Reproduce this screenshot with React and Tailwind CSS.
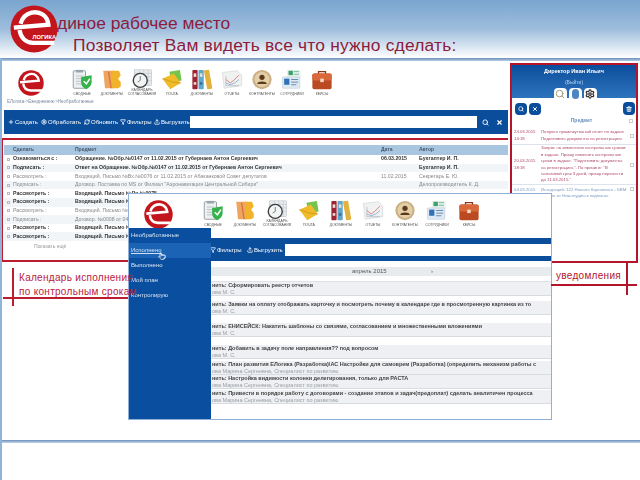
import { Plus, Settings, RefreshCw, Filter, Upload, Search, X, Trash2, Pointer } from "lucide-react";

// Логотип
function Logo({ className, label = true }) {
  return (
    <svg viewBox="0 0 100 100" className={className}>
      <circle cx="50" cy="50" r="49" fill="#c3161c" />
      <path d="M8 47 L80 41 C78 22 62 12 45 16 C33 19 25 28 22 39" fill="none" stroke="#fff" strokeWidth="9" />
      <path d="M20 52 C22 68 33 78 48 79 L92 79" fill="none" stroke="#fff" strokeWidth="9" />
      <path d="M30 36 L68 33" stroke="#c3161c" strokeWidth="2" />
      {label && (
        <text x="47" y="71" fontSize="12" fontWeight="700" fill="#fff" fontFamily="Liberation Sans, sans-serif">ЛОГИКА</text>
      )}
    </svg>
  );
}

// Иконки меню
function IconSvodka() {
  return (
    <svg viewBox="0 0 24 24" className="w-full h-full">
      <rect x="2" y="2" width="14" height="20" rx="1" fill="#eef1f2" stroke="#8b959c" />
      <rect x="5" y="1" width="8" height="3" fill="#9aa4ab" />
      <path d="M5 8h8M5 11h6M5 14h7M5 17h8" stroke="#b4bcc2" />
      <path d="M11 9 L23 7 V15 C23 20 18 22 17 23 C15 22 11 20 11 15 Z" fill="#35b34a" />
      <path d="M14 14 L17 17 L21 11" fill="none" stroke="#fff" strokeWidth="1.8" />
    </svg>
  );
}
function IconFolder() {
  return (
    <svg viewBox="0 0 24 24" className="w-full h-full">
      <path d="M2 2 H14 V22 H4 Z" fill="#eda55f" />
      <path d="M8 3 L11 22" stroke="#d9743a" strokeWidth="1.5" />
      <path d="M12 2 H20 L22 7 L19 11 L22 15 V20 L19 22 H12 Z" fill="#f1b32a" />
    </svg>
  );
}
function IconClock() {
  return (
    <svg viewBox="0 0 24 24" className="w-full h-full">
      <rect x="3" y="1" width="20" height="18" fill="#e8ecef" stroke="#a8b0b6" strokeWidth="0.5" />
      <path d="M3 5h20M3 9h20M3 13h20M9 1v18M14 1v18M19 1v18" stroke="#b9c0c6" strokeWidth="0.6" />
      <circle cx="10" cy="13" r="8" fill="#f3f4f4" stroke="#3c3f42" strokeWidth="1.6" />
      <path d="M10 8v5l-3 2" stroke="#6b6f73" fill="none" />
    </svg>
  );
}
function IconMail() {
  return (
    <svg viewBox="0 0 24 24" className="w-full h-full">
      <path d="M9 3 L21 1 L23 13 L12 15 Z" fill="#74c44d" />
      <path d="M1 11 L14 5 L22 16 L10 23 Z" fill="#f0bb28" />
      <path d="M1 11 L13 15 L22 16" fill="none" stroke="#c9901a" strokeWidth="0.8" />
    </svg>
  );
}
function IconBinders() {
  return (
    <svg viewBox="0 0 24 24" className="w-full h-full">
      <rect x="1" y="1" width="6" height="22" rx="1" fill="#9e2433" />
      <rect x="8" y="1" width="6" height="22" rx="1" fill="#5fa7c9" />
      <rect x="16" y="1" width="6" height="22" rx="1" fill="#e3b23c" transform="rotate(-10 19 12)" />
      <rect x="2.5" y="5" width="3" height="4" fill="#e9e0d8" />
      <rect x="9.5" y="5" width="3" height="4" fill="#e9e0d8" />
      <rect x="2.5" y="15" width="3" height="3" fill="#e9e0d8" />
      <rect x="9.5" y="15" width="3" height="3" fill="#3f6f8f" />
    </svg>
  );
}
function IconChart() {
  return (
    <svg viewBox="0 0 24 24" className="w-full h-full">
      <path d="M1 4 L18 2 L23 7 V19 L3 22 Z" fill="#f0f2f2" stroke="#c6cbcd" strokeWidth="0.6" />
      <path d="M5 8 V19 H20" stroke="#9aa2a8" fill="none" strokeWidth="0.6" />
      <path d="M5 12 L10 16 L14 13 L20 7" stroke="#d5504e" fill="none" strokeWidth="0.8" />
      <path d="M5 16 L10 18 L15 16 L20 12" stroke="#6f9fd0" fill="none" strokeWidth="0.8" />
    </svg>
  );
}
function IconContact() {
  return (
    <svg viewBox="0 0 24 24" className="w-full h-full">
      <circle cx="12" cy="12" r="11" fill="#cdb084" />
      <circle cx="12" cy="12" r="8.5" fill="#e3cfa8" />
      <circle cx="12" cy="9.5" r="3" fill="#5e3a1c" />
      <path d="M6.5 17 C7 13.5 17 13.5 17.5 17 Z" fill="#5e3a1c" />
    </svg>
  );
}
function IconStaff() {
  return (
    <svg viewBox="0 0 24 24" className="w-full h-full">
      <rect x="6" y="1" width="16" height="9" fill="#e9f2ef" />
      <rect x="8" y="2" width="5" height="5" fill="#3ca06a" />
      <path d="M14 3h6M14 6h6" stroke="#63b58a" />
      <rect x="1" y="9" width="20" height="13" rx="1" fill="#dfe9f3" stroke="#a9bdd2" strokeWidth="0.5" />
      <rect x="3" y="11" width="6" height="7" fill="#2f72b8" />
      <path d="M11 12h8M11 15h8M11 18h6" stroke="#5a7fa5" />
    </svg>
  );
}
function IconCase() {
  return (
    <svg viewBox="0 0 24 24" className="w-full h-full">
      <path d="M8 6 V3 H16 V6" fill="none" stroke="#8c3518" strokeWidth="1.5" />
      <rect x="1" y="5" width="22" height="18" rx="2" fill="#bb4a22" />
      <rect x="1" y="5" width="22" height="8" rx="2" fill="#d9683a" />
      <rect x="10" y="11" width="4" height="4" fill="#f0d9c2" />
    </svg>
  );
}

const mainIcons = [
  { Icon: IconSvodka, label: "СВОДНЫЕ" },
  { Icon: IconFolder, label: "ДОКУМЕНТЫ" },
  { Icon: IconClock, label: "КАЛЕНДАРЬ СОГЛАСОВАНИЯ" },
  { Icon: IconMail, label: "ПОЧТА" },
  { Icon: IconBinders, label: "ДОКУМЕНТЫ" },
  { Icon: IconChart, label: "ОТЧЕТЫ" },
  { Icon: IconContact, label: "КОНТРАГЕНТЫ" },
  { Icon: IconStaff, label: "СОТРУДНИКИ" },
  { Icon: IconCase, label: "КЕЙСЫ" },
];

const rows = [
  { bold: true, a: "Ознакомиться с :", b: "Обращение. №Обр.№0147 от 11.02.2015 от Губернаев Антон Сергеевич", c: "06.03.2015", d: "Бухгалтер И. П." },
  { bold: true, a: "Подписать :", b: "Ответ на Обращение. №Обр.№0147 от 11.02.2015 от Губернаев Антон Сергеевич", c: "", d: "Бухгалтер И. П." },
  { bold: false, a: "Рассмотреть :", b: "Входящий. Письмо №Вх.№0076 от 11.02.2015 от Абаканковой Совет депутатов", c: "11.02.2015", d: "Секретарь Е. Ю." },
  { bold: false, a: "Подписать :", b: "Договор. Поставка по МS от Филиал \"Аэронавигация Центральной Сибири\"", c: "", d: "Делопроизводитель К. Д." },
  { bold: true, a: "Рассмотреть :", b: "Входящий. Письмо №Вх.№0075", c: "", d: "" },
  { bold: true, a: "Рассмотреть :", b: "Входящий. Письмо №Вх.№0074", c: "", d: "" },
  { bold: false, a: "Рассмотреть :", b: "Входящий. Письмо №Вх", c: "", d: "" },
  { bold: false, a: "Подписать :", b: "Договор. №0008 от 04", c: "", d: "" },
  { bold: true, a: "Рассмотреть :", b: "Входящий. Письмо №Вх", c: "", d: "" },
  { bold: true, a: "Рассмотреть :", b: "Входящий. Письмо №Вх", c: "", d: "" },
];

const tasks = [
  { mt: "mt-0", t: "нить: Сформировать реестр отчетов", s: "ова М. С." },
  { mt: "mt-[5px]", t: "нить: Заявки на оплату отображать карточку и посмотреть почему в календаре где в просмотренную картинка из то", s: "ова М. С." },
  { mt: "mt-[8px]", t: "нить: ЕНИСЕЙСК: Накатить шаблоны со связями, согласованием и множественными вложениями", s: "ова М. С." },
  { mt: "mt-[8px]", t: "нить: Добавить в задачу поле направления?? под вопросом", s: "ова М. С." },
  { mt: "mt-[2px]", t: "нить: План развития ЕЛогика (Разработка)\\АС Настройки для самоврем (Разработка) (определить механизм работы с", s: "ова Марина Сергеевна, Специалист по развитию" },
  { mt: "mt-0", t: "нить: Настройка видимости колонки делегирования, только для РАСТА", s: "ова Марина Сергеевна, Специалист по развитию" },
  { mt: "mt-px", t: "нить: Привести в порядок работу с договорами - создание этапов и задач(предоплат) сделать аналитичен процесса", s: "ова Марина Сергеевна, Специалист по развитию" },
];

function ToolItem({ icon: Icon, text, className = "" }) {
  return (
    <div className={`flex items-center gap-px text-[6px] text-white whitespace-nowrap ${className}`}>
      <Icon size={6} strokeWidth={3} />
      <span>{text}</span>
    </div>
  );
}

function IconRow({ pitch }) {
  return (
    <div className="flex">
      {mainIcons.map(({ Icon, label }, i) => (
        <div key={i} className={`flex flex-col items-center ${pitch}`}>
          <div className="w-[24px] h-[21px]"><Icon /></div>
          <div className="h-[6px] w-[30px] flex items-end justify-center text-[3.5px] leading-[3.5px] text-[#555] text-center">{label}</div>
        </div>
      ))}
    </div>
  );
}

export default function App() {
  return (
    <div className="relative w-[640px] h-[480px] overflow-hidden bg-white font-['Liberation_Sans',sans-serif]">
      {/* Шапка слайда */}
      <div className="h-[58px] bg-gradient-to-b from-[#7aa5cf] via-[#9dbddc] to-white pt-[15px] text-[#8c1c3c] leading-none">
        <div className="pl-[57px] text-[17.4px] h-[22px]">диное рабочее место</div>
        <div className="pl-[73px] text-[17.4px] tracking-[0.2px]">Позволяет Вам видеть все что нужно сделать:</div>
      </div>
      <div className="h-[3px] bg-gradient-to-b from-[#6a8fbd] to-[#b9cde2]" />

      <Logo className="absolute left-[10px] top-[5px] w-[48px] h-[48px]" />

      {/* Основной экран */}
      <div className="flex h-[380px] border-l-2 border-[#8fb4da] blur-[0.35px]">
        <div className="w-[506px] shrink-0 pl-[2px]">
          <div className="h-[49px]">
            <div className="flex pt-[8px]">
              <div className="w-[63px] pl-[14px] pt-[1px]">
                <Logo className="w-[26px] h-[26px]" label={false} />
              </div>
              <IconRow pitch="w-[30px]" />
            </div>
            <div className="mt-[4px] pl-[3px] text-[4.5px] leading-none text-[#7c8ba0]">ЕЛогика-&gt;Ежедневник-&gt;Необработанные</div>
          </div>

          <div className="h-[24px] bg-[#0a4d9b] flex items-center pl-[4px] pr-[5px]">
            <ToolItem icon={Plus} text="Создать" className="w-[33px]" />
            <ToolItem icon={Settings} text="Обработать" className="w-[43px]" />
            <ToolItem icon={RefreshCw} text="Обновить" className="w-[36px]" />
            <ToolItem icon={Filter} text="Фильтры" className="w-[34px]" />
            <ToolItem icon={Upload} text="Выгрузить" className="w-[36px]" />
            <div className="flex-1 h-[12px] bg-white" />
            <Search size={7} strokeWidth={3} className="text-white ml-[5px]" />
            <X size={7} strokeWidth={4} className="text-white ml-[7px]" />
          </div>

          {/* Красная рамка списка */}
          <div className="mt-[4px] -ml-[2px] h-[124px] border-t-2 border-l border-b-2 border-[#bb1c2e] pt-[5px] pl-[1px]">
            <div className="h-[10px] bg-[#a9c6e0] flex items-center text-[5px] text-[#44566a] font-bold">
              <span className="w-[9px]" />
              <span className="w-[62px]">Сделать</span>
              <span className="w-[306px]">Предмет</span>
              <span className="w-[38px]">Дата</span>
              <span>Автор</span>
            </div>
            {rows.map((r, i) => (
              <div
                key={i}
                className={`h-[8.6px] flex items-center text-[5.2px] whitespace-nowrap ${i % 2 ? "bg-[#f2f5f8]" : "bg-white"} ${r.bold ? "font-bold text-[#333]" : "text-[#888]"}`}
              >
                <span className="w-[3px] h-[3px] ml-[3px] mr-[3px] border border-[#bbb]" />
                <span className="w-[62px]">{r.a}</span>
                <span className="w-[306px]">{r.b}</span>
                <span className="w-[38px]">{r.c}</span>
                <span>{r.d}</span>
              </div>
            ))}
            <div className="pl-[30px] mt-[2px] text-[5px] text-[#999]">Показать ещё</div>
          </div>
        </div>

        {/* Правая панель */}
        <div className="w-[130px] shrink-0 pl-[2px]">
          <div className="mt-[2px] h-[200px] w-[128px] border-2 border-[#b5152b] flex flex-col">
            <div className="h-[33px] shrink-0 bg-gradient-to-b from-[#0a4d9b] to-[#2e74bd] text-white text-center">
              <div className="text-[5.5px] font-bold pt-[4px] leading-none">Директор Иван Ильич</div>
              <div className="text-[5px] pt-[5px] leading-none text-[#b9d3ee]">(Выйти)</div>
              <div className="flex justify-center gap-[2px] mt-[3px] pl-[2px]">
                <div className="w-[13px] h-[13px] bg-white rounded-t-sm flex items-center justify-center"><Search size={10} className="text-[#8a8a6a]" /></div>
                <div className="w-[13px] h-[13px] bg-white rounded-t-sm flex items-center justify-center"><div className="w-[7px] h-[10px] rounded-sm bg-[#4d86c0]" /></div>
                <div className="w-[13px] h-[13px] bg-white rounded-t-sm flex items-center justify-center"><Settings size={10} strokeWidth={3} className="text-[#333]" /></div>
              </div>
            </div>
            <div className="flex items-center pl-[3px] pr-px mt-[4px] h-[13px] shrink-0">
              <div className="w-[12px] h-[12px] rounded-sm bg-[#0a4d9b] flex items-center justify-center"><Search size={6} strokeWidth={3} className="text-white" /></div>
              <div className="w-[12px] h-[12px] ml-[2px] rounded-sm bg-[#0a4d9b] flex items-center justify-center"><X size={6} strokeWidth={4} className="text-white" /></div>
              <div className="flex-1" />
              <div className="w-[12px] h-[13px] rounded-sm bg-[#0a4d9b] flex items-center justify-center"><Trash2 size={6} strokeWidth={3} className="text-white" /></div>
            </div>
            <div className="flex items-center h-[12px] shrink-0 text-[5px] font-bold text-[#6a8fc0]">
              <div className="flex-1 text-center pl-[22px]">Предмет</div>
              <div className="w-[4px] h-[4px] mr-[3px] border border-[#ccc]" />
            </div>
            <div className="flex items-center text-[4.3px] leading-[6.4px] text-[#b04a68] h-[18px] shrink-0 border-b border-[#dde3ea] pl-[2px]">
              <div className="w-[27px] shrink-0">24.03.2015 14:18</div>
              <div className="w-[87px] shrink-0">Получен промежуточный отчет по задаче Подготовить документы на регистрацию</div>
              <div className="w-[4px] h-[4px] ml-[2px] border border-[#ccc]" />
            </div>
            <div className="flex items-center text-[4.3px] leading-[6.4px] text-[#b04a68] h-[40px] shrink-0 border-b border-[#dde3ea] pl-[2px]">
              <div className="w-[27px] shrink-0">20.03.2015 18:18</div>
              <div className="w-[87px] shrink-0">Запрос на изменение контрольных сроков в задаче. Прошу изменить контрольные сроки в задаче. "Подготовить документы на регистрацию.". По причине: "В налоговой срок 3 дней, прошу перенести до 11.03.2015."</div>
              <div className="w-[4px] h-[4px] ml-[2px] border border-[#ccc]" />
            </div>
            <div className="flex items-start pt-[2px] text-[4.3px] leading-[6.4px] text-[#7d9ec4] pl-[2px]">
              <div className="w-[27px] shrink-0">04.03.2015</div>
              <div className="w-[87px] shrink-0">Исходящий. 122 Начало Каргалинск - БВМ письмо от Нижнеудинск подписан</div>
              <div className="w-[4px] h-[4px] ml-[2px] border border-[#ccc]" />
            </div>
          </div>
        </div>
      </div>

      {/* Нижняя линия */}
      <div className="absolute left-[2px] right-0 top-[440px] h-[3px] bg-gradient-to-b from-[#6a8fbd] to-[#c5d5e6]" />
      <div className="absolute left-0 top-[58px] bottom-0 w-[2px] bg-[#8fb4da]" />

      {/* Окно поверх */}
      <div className="absolute left-[128px] top-[193px] w-[424px] h-[227px] bg-white border border-[#8fb0d8] flex flex-col blur-[0.35px]">
        <div className="h-[44px] shrink-0 flex pt-[6px]">
          <div className="w-[68px] pl-[15px]"><Logo className="w-[29px] h-[29px]" label={false} /></div>
          <IconRow pitch="w-[32px]" />
        </div>
        <div className="h-[23px] shrink-0 bg-[#0a4d9b] flex items-center pl-[81px] pt-[1px]">
          <ToolItem icon={Filter} text="Фильтры" className="w-[37px]" />
          <ToolItem icon={Upload} text="Выгрузить" className="w-[38px]" />
          <div className="flex-1 h-[12px] bg-white" />
        </div>
        <div className="h-[6px] shrink-0" />
        <div className="h-[9px] shrink-0 bg-[#e8ebee] flex items-center text-[6px] text-[#555]">
          <span className="ml-[223px] w-[79px]">апрель 2015</span>
          <span>›</span>
        </div>
        <div className="h-[6px] shrink-0 border-b border-[#dfe3e7]" />
        <div className="pl-[82px] overflow-hidden">
          {tasks.map((t, i) => (
            <div key={i} className={`${t.mt} h-[14px] bg-[#eef0f3] border-b border-[#d8dce1] pl-px whitespace-nowrap text-[5.5px] leading-[7px]`}>
              <div className="font-bold text-[#444]">{t.t}</div>
              <div className="text-[#9a9ea4]">{t.s}</div>
            </div>
          ))}
        </div>

        {/* Выпадающее меню */}
        <div className="absolute left-0 top-[34px] bottom-0 w-[82px] bg-[#0a4f9f] text-[6px] text-white">
          <div className="h-[15px] flex items-center pl-[2px] text-[#d6e2f0]">Необработанные</div>
          <div className="h-[15px] flex items-center pl-[2px] bg-[#1a63b5] text-[#cfe0f2] underline relative">
            Исполнено
            <Pointer size={8} className="absolute left-[29px] top-[9px] text-white" />
          </div>
          <div className="h-[15px] flex items-center pl-[2px] text-[#d6e2f0]">Выполнено</div>
          <div className="h-[15px] flex items-center pl-[2px] text-[#d6e2f0]">Мой план</div>
          <div className="h-[15px] flex items-center pl-[2px] text-[#d6e2f0]">Контролирую</div>
        </div>
      </div>

      {/* Подписи-выноски поверх экрана */}
      <div className="absolute left-[3px] top-[268px] w-[125px] h-[38px]">
        <div className="absolute left-[9px] top-0 w-[2px] h-[38px] bg-[#bb1c2e]" />
        <div className="absolute left-0 right-0 top-[29px] h-[2px] bg-[#bb1c2e]" />
        <div className="absolute left-[16px] top-[3px] text-[10px] leading-[13.5px] tracking-[0.3px] text-[#bb2040] whitespace-nowrap">
          Календарь исполнения<br />по контрольным срокам
        </div>
      </div>
      <div className="absolute left-[551px] top-[262px] w-[86px] h-[33px]">
        <div className="absolute right-[9px] top-0 w-[2px] h-[33px] bg-[#b5152b]" />
        <div className="absolute left-0 right-0 top-[22px] h-[2px] bg-[#b5152b]" />
        <div className="absolute left-[5px] top-[7px] text-[10px] leading-[14px] tracking-[0.3px] text-[#b5152b] whitespace-nowrap">уведомления</div>
      </div>
    </div>
  );
}
